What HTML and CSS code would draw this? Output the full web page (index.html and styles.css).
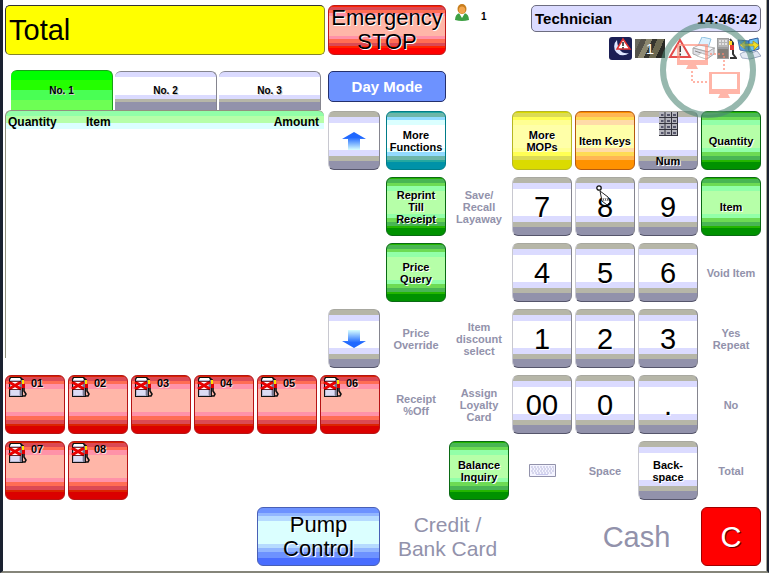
FILE: index.html
```html
<!DOCTYPE html>
<html lang="en">
<head>
<meta charset="utf-8">
<title>Point of Sale</title>
<link rel="stylesheet" href="styles.css">
</head>
<body>
<svg width="0" height="0" class="defs" aria-hidden="true">
  <symbol id="pump" viewBox="0 0 19 21">
    <path d="M2 0h11l2 2v18H1V2z" fill="#111"/>
    <path d="M3 1h9l1 2H2z" fill="#fff"/>
    <path d="M2 3h10v16H2z" fill="#b8b8d4"/>
    <path d="M3 4h8v8H3z" fill="#fff"/>
    <path d="M3 13h8v5H3z" fill="#dcdcf4"/>
    <path d="M12 3h2v16h-2z" fill="#77778c"/>
    <path d="M15 2v4l1 2v6l2 3-1 2h-3" fill="none" stroke="#111" stroke-width="1.6"/>
    <path d="M14 3h2v4h-2z" fill="#ffe000"/>
    <path d="M14 7h3v4h-3z" fill="#e00000"/>
    <path d="M1 5l12 7M13 5L1 12" stroke="#e80000" stroke-width="3"/>
    <path d="M1 4.500h12M1 12.500h12" stroke="#500" stroke-width=".8"/>
  </symbol>
</svg>
<main class="screen">
  <header class="top">
    <div class="total">Total</div>
    <button class="key emergency large">Emergency<br>STOP</button>
    <section class="session">
      <div class="user">
        <svg width="14" height="17" viewBox="0 0 14 17"><path d="M0 16q0-6 5-7h4q5 1 5 7-7 2-14 0z" fill="#3da044"/><path d="M4 9l3 5 3-5z" fill="#fff"/><ellipse cx="7" cy="5" rx="4.500" ry="5" fill="#c77d1c"/><ellipse cx="7" cy="6" rx="3.200" ry="3.500" fill="#f3a54c"/></svg>
        <span>1</span>
      </div>
      <div class="operator"><span>Technician</span><time>14:46:42</time></div>
      <div class="status">
        <svg width="23" height="23" viewBox="0 0 23 23"><rect width="23" height="23" rx="3" fill="#1b1f55"/><path d="M8 3a8 8 0 1 0 12 13Q9 18 8 3z" fill="#dfe6ff"/><path d="M14 2l7 10H8z" fill="#fff" stroke="#e03030" stroke-width="1.500"/><path d="M14 5v4M14 10v1.500" stroke="#222" stroke-width="1.500"/></svg>
        <span class="count">1</span>
        <svg width="24" height="23" viewBox="0 0 24 23"><path d="M12 3l10 17H2z" fill="#f4f4f4" stroke="#e02c2c" stroke-width="2"/><path d="M12 9v6M12 16.500v2" stroke="#222" stroke-width="2"/></svg>
        <svg width="24" height="23" viewBox="0 0 24 23"><path d="M10 0l9 2-3 9-10-2z" fill="#d8efff" stroke="#7db7dc"/><path d="M1 11l6-3 16 3-6 4z" fill="#f8f8fb" stroke="#aaa"/><path d="M1 11v6l14 5 7-5v-6l-6 4z" fill="#dadae2" stroke="#999"/><path d="M3 14l12 4" stroke="#777"/><path d="M9 16l9 3-4 3-9-3z" fill="#fff" stroke="#bbb"/></svg>
        <svg width="21" height="23" viewBox="0 0 21 23"><path d="M1 1h12v21H1z" fill="#8c8c8c"/><path d="M2 2h10v8H2z" fill="#aaa"/><path d="M3 4h2m1 0h2m1 0h2M3 7h2m1 0h2m1 0h2" stroke="#eee" stroke-width="1.500"/><path d="M2 12h10v9H2z" fill="#6e6860"/><path d="M14 2l3 4v11l3 4H14" fill="none" stroke="#111" stroke-width="2"/><path d="M13 4h3v4h-3z" fill="#ffcf00"/><path d="M14 8h4v5h-4z" fill="#e01818"/></svg>
        <svg width="24" height="23" viewBox="0 0 24 23"><path d="M1 3l11 1v11L3 13z" fill="#3a8fe0" stroke="#345a9a"/><path d="M12 3l9-2 1 11-10 3z" fill="#6cc3f4" stroke="#345a9a"/><path d="M3 17q6-4 11-1l6-2 4 5-11 3-8-1z" fill="#dfe5f2" stroke="#98a5c0"/><path d="M3 8l5-4v3h8V4l6 4-5 5V9H8v3z" fill="#f0df2a" stroke="#a58c10" stroke-width=".7"/></svg>
      </div>
      <svg class="watermark" width="98" height="98" viewBox="0 0 98 98" aria-hidden="true">
        <circle cx="49" cy="49" r="45" fill="#fff" fill-opacity=".15" stroke="#4b8574" stroke-opacity=".58" stroke-width="6"/>
        <g fill="#ff8873" fill-opacity=".62">
          <path fill-rule="evenodd" d="M18 23h31v21H18zM21 25v14h25V25zM50 51h31v22H50zM53 53v15h25V53zM29 44h8l2 4H27zM61 73h8l2 4H59z"/>
        </g>
        <path d="M33 50v11h17M51 33h14v18" fill="none" stroke="#ff8873" stroke-opacity=".62" stroke-dasharray="2 2" stroke-width="2"/>
      </svg>
    </section>
    <nav class="tabs">
      <button class="tab active">No. 1</button>
      <button class="tab">No. 2</button>
      <button class="tab">No. 3</button>
    </nav>
    <button class="mode">Day Mode</button>
  </header>

  <div class="work">
    <section class="left">
      <div class="sale">
        <table class="receipt">
          <thead><tr><th>Quantity</th><th>Item</th><th class="amount">Amount</th></tr></thead>
        </table>
        <div class="scroll">
          <button class="key plain" aria-label="Scroll up"><svg width="24" height="18" viewBox="0 0 24 18"><defs><linearGradient id="up" x2="0" y2="1"><stop offset=".3" stop-color="#2068ff"/><stop offset="1" stop-color="#d8ffff"/></linearGradient></defs><path d="M12 0l12 7h-6v11H6V7H0z" fill="url(#up)"/></svg></button>
          <button class="key plain" aria-label="Scroll down"><svg width="24" height="18" viewBox="0 0 24 18"><defs><linearGradient id="down" x2="0" y2="1"><stop offset="0" stop-color="#d8ffff"/><stop offset=".7" stop-color="#2068ff"/></linearGradient></defs><path d="M12 18l12-7h-6V0H6v11H0z" fill="url(#down)"/></svg></button>
        </div>
      </div>
      <div class="pumps">
        <button class="key pump"><svg width="19" height="21"><use href="#pump"/></svg><span>01</span></button>
        <button class="key pump"><svg width="19" height="21"><use href="#pump"/></svg><span>02</span></button>
        <button class="key pump"><svg width="19" height="21"><use href="#pump"/></svg><span>03</span></button>
        <button class="key pump"><svg width="19" height="21"><use href="#pump"/></svg><span>04</span></button>
        <button class="key pump"><svg width="19" height="21"><use href="#pump"/></svg><span>05</span></button>
        <button class="key pump"><svg width="19" height="21"><use href="#pump"/></svg><span>06</span></button>
        <button class="key pump"><svg width="19" height="21"><use href="#pump"/></svg><span>07</span></button>
        <button class="key pump"><svg width="19" height="21"><use href="#pump"/></svg><span>08</span></button>
        <button class="key blue large wide pump-control">Pump<br>Control</button>
      </div>
    </section>

    <section class="keys">
      <button class="key teal">More<br>Functions</button>
      <button class="key yellow col-3">More<br>MOPs</button>
      <button class="key orange">Item Keys</button>
      <button class="key plain num"><svg width="19" height="24" viewBox="0 0 19 24"><path d="M0 0h19v24H0z" fill="#b4b4bc"/><path d="M0 5.500h19M0 11.500h19M0 17.500h19M0 23.500h19M6 0v24M12.500 0v24M18.500 0v24" stroke="#33333d"/><path d="M2 3h2.500m3.500 0h3m3 0h3M2 9h2.500m3.500 0h3m3 0h3M2 15h2.500m3.500 0h3m3 0h3M2 21h2.500m3.500 0h3m3 0h3" stroke="#55556a" stroke-width="2"/></svg><span>Num</span></button>
      <button class="key green">Quantity</button>

      <button class="key green">Reprint<br>Till<br>Receipt</button>
      <button class="key" disabled>Save/<br>Recall<br>Layaway</button>
      <button class="key plain digit">7</button>
      <button class="key plain digit">8<svg class="pointer" width="16" height="22" viewBox="0 0 16 22" aria-hidden="true"><circle cx="3" cy="3" r="2.200" fill="#fff" stroke="#111" stroke-width="1.300"/><path d="M4 6l8 6 2 5-3 3-5-4z" fill="#fff" stroke="#222"/><path d="M7 13l1 3m1-3l1 3m1-3l1 3" stroke="#444" stroke-width=".8"/></svg></button>
      <button class="key plain digit">9</button>
      <button class="key green">Item</button>

      <button class="key green">Price<br>Query</button>
      <button class="key plain digit col-3">4</button>
      <button class="key plain digit">5</button>
      <button class="key plain digit">6</button>
      <button class="key" disabled>Void Item</button>

      <button class="key" disabled>Price<br>Override</button>
      <button class="key" disabled>Item<br>discount<br>select</button>
      <button class="key plain digit">1</button>
      <button class="key plain digit">2</button>
      <button class="key plain digit">3</button>
      <button class="key" disabled>Yes<br>Repeat</button>

      <button class="key" disabled>Receipt<br>%Off</button>
      <button class="key" disabled>Assign<br>Loyalty<br>Card</button>
      <button class="key plain digit">00</button>
      <button class="key plain digit">0</button>
      <button class="key plain digit">.</button>
      <button class="key" disabled>No</button>

      <button class="key green col-2">Balance<br>Inquiry</button>
      <button class="key" disabled aria-label="Keyboard"><svg width="27" height="13" viewBox="0 0 27 13"><path d="M.5.5h26v12H.5z" fill="#f4f4ff" stroke="#9292ab"/><path d="M2 3h23M3 5h22M2 7h23M3 9h21" stroke="#b9b9dc" stroke-dasharray="2 1"/><path d="M7 10.500h12" stroke="#c8c8ee"/></svg></button>
      <button class="key" disabled>Space</button>
      <button class="key plain">Back-<br>space</button>
      <button class="key" disabled>Total</button>

      <button class="key large wide" disabled>Credit /<br>Bank Card</button>
      <button class="key digit wide col-4" disabled>Cash</button>
      <button class="key digit clear">C</button>
    </section>
  </div>
</main>
</body>
</html>
```
FILE: styles.css
```css
* { box-sizing: border-box; }

body {
  margin: 0;
  background: #fff;
  color: #000;
  font: bold 11px/12px "Liberation Sans", Arial, sans-serif;
}

.defs { position: absolute; }
svg { display: block; flex: none; }

button {
  margin: 0;
  padding: 0;
  border: 0;
  font: inherit;
  color: inherit;
}

.screen {
  min-height: 100vh;
  padding: 5px 6px 5px 2px;
  border-left: 3px solid #1a2130;
  border-right: 2px solid #1a2130;
  border-bottom: 2px solid #85857a;
  box-shadow: inset -1px 0 #a5a598;
}

/* Header */
.top {
  display: grid;
  grid-template-columns: 320fr 118fr 312fr;
  grid-template-rows: 50px 40px;
  gap: 15px 3px;
}

.total {
  display: flex;
  align-items: center;
  padding-left: 3px;
  border: 1px solid #85852a;
  border-top-color: #333;
  border-left-color: #333;
  border-radius: 5px;
  background: #ff0;
  font-size: 29px;
  font-weight: normal;
}

.session {
  position: relative;
  grid-column: 3;
  grid-row: 1 / 3;
  display: grid;
  grid-template-columns: 1fr 230px;
  grid-template-rows: 27px 23px;
  row-gap: 5px;
}

.user { display: flex; gap: 12px; padding-left: 6px; font-size: 10px; line-height: 23px; }
.user svg { margin-top: -1px; }

.operator {
  display: flex;
  justify-content: space-between;
  align-items: center;
  padding: 0 3px;
  border: 1px solid #6d6d80;
  border-radius: 5px;
  background: #dbdbff;
  font-size: 15px;
}

.status {
  grid-column: 2;
  display: flex;
  justify-content: flex-end;
  align-items: center;
}

.count {
  width: 30px;
  margin: 0 3px;
  background: linear-gradient(115deg, #6b695e 15%, #55534a 15% 30%, #8c8870 30% 45%, #34342e 45% 58%, #6b6850 58% 76%, #292925 76%);
  color: #fff;
  font-size: 15px;
  font-weight: normal;
  line-height: 19px;
  text-align: center;
}

.watermark {
  position: absolute;
  top: 16px;
  right: 4px;
  z-index: 1;
  pointer-events: none;
}

.tabs {
  display: grid;
  grid-template-columns: repeat(3, 1fr);
  gap: 2px;
  padding: 0 4px 0 6px;
}

.tab {
  margin-top: 1px;
  border: 1px solid #85858f;
  border-width: 1px 1px 0 0;
  border-radius: 6px 6px 0 0;
  background: linear-gradient(#dbdbff 6px, #fff 6px 24px, #dbdbff 24px 28px, #b6b6a8 28px 31px, #9292ab 31px) border-box;
  font-size: 10px;
  text-shadow: 1px 1px #ccc;
}

.tab.active {
  margin-top: 0;
  border-color: #18a018;
  background: linear-gradient(#00ff00 10px, #24ff00 10px 20px, #49ff54 20px 30px, #6dff54 30px) border-box;
}

.mode {
  height: 31px;
  margin-top: 1px;
  border: 1px solid #24306d;
  border-radius: 5px;
  background: #6d92ff;
  color: #fff;
  font-size: 15px;
}

/* Work area */
.work {
  display: grid;
  grid-template-columns: 1fr 1fr;
  gap: 6px;
}

.left { display: grid; grid-template-rows: 257px auto; gap: 7px; padding-top: 1px; }

.sale { display: grid; grid-template-columns: 1fr 52px; gap: 4px; }

.receipt {
  width: 100%;
  height: 248px;
  margin-top: -1px;
  border-collapse: separate;
  border-spacing: 0;
  border: 1px solid #92927f;
  border-width: 1px 0 0 1px;
  border-radius: 6px 6px 0 0;
  background: linear-gradient(#92ffa8 6px, #b6ffa8 6px 13px, #dbffff 13px 19px, #fff 19px) border-box;
}

.receipt th {
  width: 78px;
  padding: 5px 2px 0;
  vertical-align: top;
  text-align: left;
  font-size: 12px;
}
.receipt .amount { width: auto; padding-right: 5px; text-align: right; }

.scroll { display: flex; flex-direction: column; justify-content: space-between; }
.scroll .key { height: 59px; }

.pumps, .keys {
  display: grid;
  grid-template-columns: repeat(6, minmax(0, 1fr));
  grid-auto-rows: 59px;
  gap: 7px 3px;
}
.keys { padding-top: 1px; }

.col-2 { grid-column-start: 2; }
.col-3 { grid-column-start: 3; }
.col-4 { grid-column-start: 4; }
.wide { grid-column-end: span 2; }
.pump-control { grid-column-start: 5; grid-row: 3; }

/* Keys: banded faces share one gradient, coloured per kind */
.key {
  position: relative;
  display: flex;
  flex-direction: column;
  align-items: center;
  justify-content: center;
  border: 1px solid var(--edge, #85858f);
  border-radius: 6px;
  background: linear-gradient(
    var(--a) 4%, var(--b) 4% 10%, var(--c) 10% 16%, var(--d) 16% 23%,
    var(--e) 23% 63%,
    var(--d) 63% 69%, var(--c) 69% 76%, var(--b) 76% 83%, var(--a) 83% 87%, var(--f) 87%) border-box;
  text-align: center;
  text-shadow: 1px 1px #fff;
}

.key:disabled {
  border-color: transparent;
  background: none;
  color: #9292ab;
  text-shadow: none;
}

.large { font-size: 22px; font-weight: normal; line-height: 24px; }
.key.large:disabled { font-size: 21px; }
.digit { font-size: 29px; font-weight: normal; line-height: 32px; }

.plain {
  border-color: #a8a8a0 #85858f #55556b #c8c8d0;
  background: linear-gradient(#b6b6a8 6px, #dbdbff 6px 12px, #fff 12px 39px, #dbdbff 39px 45px, #b6b6a8 45px 50px, #9292ab 50px) border-box;
}

.green { --edge: #0a6a14; --a: #24b600; --b: #49b654; --c: #6ddb54; --d: #92ffa8; --e: #b6ffa8; --f: #009200; }
.teal { --edge: #007c88; --a: #24a8a0; --b: #6db6a8; --c: #92dbff; --d: #dbffff; --e: #fff; --f: #0092a8; }
.yellow { --edge: #b6b624; --a: #dbdb00; --b: #dbdb54; --c: #ffff54; --d: #ffff92; --e: #ffffa8; --f: #dbdb00; }
.orange { --edge: #b65a10; --a: #ff9200; --b: #ffb654; --c: #ffdb54; --d: #ffdba8; --e: #ffffa8; --f: #ff9200; }
.blue { --edge: #4960b6; --a: #6d92ff; --b: #6d92ff; --c: #92b6ff; --d: #b6dbff; --e: #dbffff; --f: #496dff; }
.emergency { --edge: #c01818; --a: #ff2400; --b: #db4954; --c: #ff6d54; --d: #ff92a8; --e: #ffb6a8; --f: #f00; }
.pump { --edge: #b61414; --a: #db2400; --b: #db4954; --c: #ff6d54; --d: #ff92a8; --e: #ffb6a8; --f: #db0000; }

.pump {
  flex-direction: row;
  align-items: flex-start;
  justify-content: flex-start;
  gap: 4px;
  padding: 1px 2px;
  text-shadow: 1px 1px #ffdbdb;
}

.num { justify-content: space-between; padding-bottom: 2px; }

.clear {
  border-color: #a00000;
  background: #f00;
  color: #fff;
  text-shadow: 1px 1px #600;
}

.pointer { position: absolute; top: 7px; left: 20px; }
```
